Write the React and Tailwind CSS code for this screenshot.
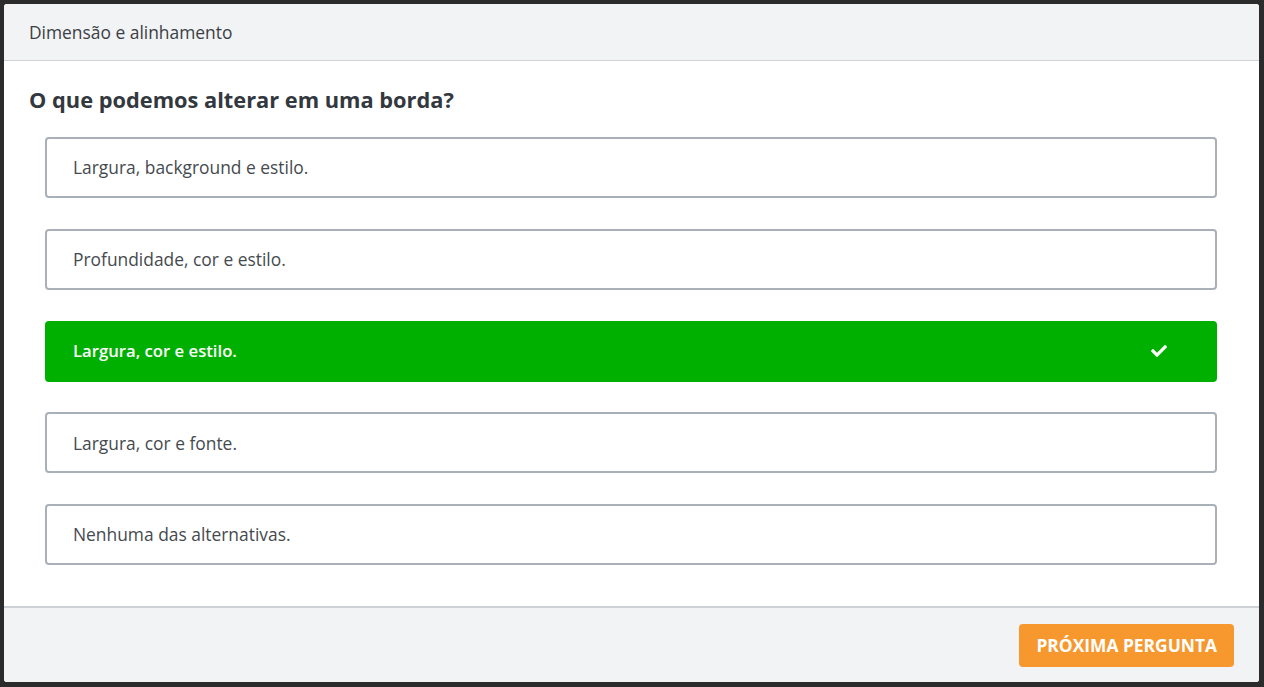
import { FaCheck } from 'react-icons/fa';

const options = [
  { text: 'Largura, background e estilo.', correct: false },
  { text: 'Profundidade, cor e estilo.', correct: false },
  { text: 'Largura, cor e estilo.', correct: true },
  { text: 'Largura, cor e fonte.', correct: false },
  { text: 'Nenhuma das alternativas.', correct: false },
];

export default function App() {
  return (
    <div
      className="w-[1264px] h-[687px] bg-[#2b2b2b] pt-[4px] pl-[4px] pr-[5px] pb-[5px]"
      style={{ fontFamily: '"Open Sans", "Noto Sans", sans-serif' }}
    >
      <div className="h-full flex flex-col bg-white rounded-[3px] overflow-hidden">
        {/* Header */}
        <div className="h-[57px] flex items-center px-[25px] bg-[#f2f3f5] border-b border-[#cfd2d6] text-[17.4px] text-[#3a3f44] flex-shrink-0">
          Dimensão e alinhamento
        </div>

        {/* Body */}
        <div className="flex-1 pt-[25px] px-[25px]">
          <h1 className="text-[21.8px] leading-[28px] font-bold text-[#32383e]">
            O que podemos alterar em uma borda?
          </h1>
          <div className="mt-[23px] ml-[16px] mr-[17px] flex flex-col gap-[30.75px]">
            {options.map((opt) =>
              opt.correct ? (
                <div
                  key={opt.text}
                  className="h-[61px] flex items-center justify-between pl-[28px] pr-[50px] rounded-[4px] bg-[#00b000] text-white text-[16.7px] font-semibold"
                >
                  <span>{opt.text}</span>
                  <FaCheck className="w-[16px] h-[16px]" />
                </div>
              ) : (
                <div
                  key={opt.text}
                  className="h-[61px] flex items-center pl-[26px] rounded-[4px] border-2 border-[#a9b0b8] text-[17.4px] text-[#454a4f]"
                >
                  {opt.text}
                </div>
              )
            )}
          </div>
        </div>

        {/* Footer */}
        <div className="h-[76px] flex items-center justify-end px-[25px] bg-[#f2f3f5] border-t-2 border-[#cdd0d4] flex-shrink-0">
          <button className="h-[43px] px-[17px] rounded-[4px] bg-[#f7982f] text-white text-[17.4px] font-bold uppercase">
            Próxima pergunta
          </button>
        </div>
      </div>
    </div>
  );
}
